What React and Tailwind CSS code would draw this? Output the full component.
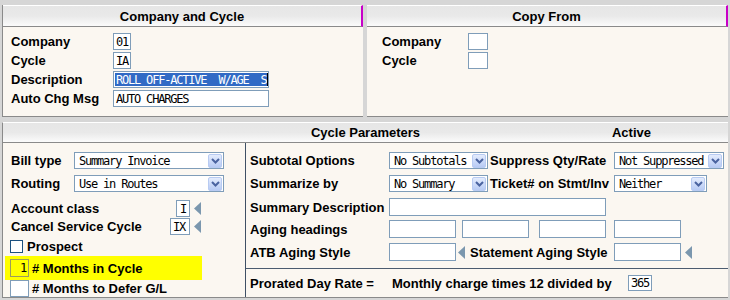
import React from 'react';

const mono = "font-['DejaVu_Sans_Mono',monospace] text-[12px] font-normal tracking-[-1.2px] leading-none whitespace-nowrap text-black";

const Chevron = () => (
  <svg width="9" height="6" viewBox="0 0 9 6">
    <path d="M1 1l3.5 3.5L8 1" fill="none" stroke="#4a63a0" strokeWidth="2" />
  </svg>
);

const Arrow = () => (
  <svg width="7" height="13" viewBox="0 0 7 13" className="shrink-0">
    <polygon points="7,0 7,13 0,6.5" fill="#7b97ae" />
  </svg>
);

const Select = ({ value, w }) => (
  <div className={`flex h-[17px] shrink-0 items-center border border-[#7f9db9] bg-white ${w}`}>
    <span className={`flex-1 pl-[4px] ${mono}`}>{value}</span>
    <div className="mr-[1px] flex h-[14px] w-[14px] items-center justify-center rounded-[2px] border border-[#b8cbf2] bg-linear-to-b from-[#e4ecfd] to-[#b7caf4]">
      <Chevron />
    </div>
  </div>
);

const Input = ({ value, w, h = 'h-[17px]', className = '' }) => (
  <div className={`flex shrink-0 items-center border border-[#7f9db9] bg-white pl-[2px] ${w} ${h} ${className}`}>
    <span className={mono}>{value}</span>
  </div>
);

const Head = ({ children, className = '' }) => (
  <div className={`flex h-[22px] items-center justify-center border-t border-t-white border-b border-b-[#8a8a8a] bg-linear-to-b from-[#e6e6e6] via-[#e9e9e9] to-[#fbfbfb] ${className}`}>
    {children}
  </div>
);

export default function App() {
  return (
    <div className="h-[300px] w-[730px] overflow-hidden bg-[#d6d6d6] font-['Liberation_Sans',Arial,sans-serif] text-[13px] font-bold leading-[15px] text-black">
      {/* Top: Company and Cycle / Copy From */}
      <div className="flex h-[117px] pl-[2px] pt-[5px]">
        <div className="flex w-[361px] flex-col border-l border-[#8a8a8a]">
          <Head className="border-r-2 border-r-[#c800c8]">Company and Cycle</Head>
          <div className="flex flex-1 flex-col gap-[2px] border-b border-[#8a8a8a] bg-[#fbf7f1] pl-[8px] pt-[6px]">
            <div className="flex h-[17px] items-center">
              <span className="w-[102px]">Company</span>
              <Input value="01" w="w-[18px]" />
            </div>
            <div className="flex h-[17px] items-center">
              <span className="w-[102px]">Cycle</span>
              <Input value="IA" w="w-[18px]" />
            </div>
            <div className="flex h-[17px] items-center">
              <span className="w-[102px]">Description</span>
              <div className="flex h-[17px] w-[156px] items-center border border-[#7f9db9] bg-white px-[1px]">
                <span className={`${mono} flex h-[13px] flex-1 items-center bg-[#316ac5] pl-[1px] !text-white`}>
                  ROLL OFF-ACTIVE&nbsp;&nbsp;W/AGE&nbsp;&nbsp;S
                </span>
                <span className="h-[13px] w-[1px] bg-black" />
              </div>
            </div>
            <div className="flex h-[17px] items-center">
              <span className="w-[102px]">Auto Chg Msg</span>
              <Input value="AUTO CHARGES" w="w-[156px]" />
            </div>
          </div>
        </div>

        <div className="ml-[4px] flex w-[361px] flex-col">
          <Head className="border-r-2 border-r-[#c800c8]">Copy From</Head>
          <div className="flex flex-1 flex-col gap-[2px] border-b border-[#8a8a8a] bg-[#fbf7f1] pl-[15px] pt-[6px]">
            <div className="flex h-[17px] items-center">
              <span className="w-[86px]">Company</span>
              <Input value="" w="w-[20px]" />
            </div>
            <div className="flex h-[17px] items-center">
              <span className="w-[86px]">Cycle</span>
              <Input value="" w="w-[20px]" />
            </div>
          </div>
        </div>
      </div>

      {/* Cycle Parameters */}
      <div className="ml-[2px] mt-[5px] w-[726px]">
        <div className="grid h-[21px] grid-cols-[1fr_auto_1fr] items-center border-l border-t border-[#8a8a8a] border-t-white border-b border-b-[#8a8a8a] bg-linear-to-b from-[#e6e6e6] via-[#e9e9e9] to-[#fbfbfb]">
          <span />
          <span>Cycle Parameters</span>
          <span className="pr-[77px] text-right">Active</span>
        </div>

        <div className="flex h-[155px] border-b border-l border-[#8a8a8a] bg-[#fbf7f1]">
          {/* left column */}
          <div className="flex w-[243px] flex-col border-r border-[#3f5065] pt-[9px]">
            <div className="flex h-[17px] items-center pl-[8px]">
              <span className="w-[63px]">Bill type</span>
              <Select value="Summary Invoice" w="w-[150px]" />
            </div>
            <div className="mt-[6px] flex h-[17px] items-center pl-[8px]">
              <span className="w-[63px]">Routing</span>
              <Select value="Use in Routes" w="w-[150px]" />
            </div>
            <div className="mt-[8px] flex h-[17px] w-[198px] items-center pl-[8px]">
              <span className="flex-1">Account class</span>
              <Input value="I" w="w-[14px]" className="!pl-[3px]" />
              <span className="ml-[4px] flex"><Arrow /></span>
            </div>
            <div className="mt-[1px] flex h-[17px] w-[198px] items-center pl-[8px]">
              <span className="flex-1">Cancel Service Cycle</span>
              <Input value="IX" w="w-[20px]" />
              <span className="ml-[4px] flex"><Arrow /></span>
            </div>
            <div className="mt-[4px] flex h-[15px] items-center pl-[7px]">
              <span className="h-[13px] w-[13px] border border-[#1c5180] bg-white" />
              <span className="ml-[4px]">Prospect</span>
            </div>
            <div className="ml-[2px] mt-[2px] flex h-[24px] w-[197px] items-center bg-[#ffff00]">
              <div className="ml-[5px] flex h-[18px] w-[19px] items-center justify-end border border-[#9c9c5c] pr-[2px]">
                <span className={mono}>1</span>
              </div>
              <span className="ml-[3px]"># Months in Cycle</span>
            </div>
            <div className="flex h-[17px] items-center pl-[7px]">
              <Input value="" w="w-[19px]" />
              <span className="ml-[3px]"># Months to Defer G/L</span>
            </div>
          </div>

          {/* right column */}
          <div className="flex flex-1 flex-col pt-[9px]">
            <div className="flex h-[17px] items-center pl-[4px]">
              <span className="w-[139px]">Subtotal Options</span>
              <Select value="No Subtotals" w="w-[99px]" />
              <span className="ml-[2px] w-[124px]">Suppress Qty/Rate</span>
              <Select value="Not Suppressed" w="w-[110px]" />
            </div>
            <div className="mt-[6px] flex h-[17px] items-center pl-[4px]">
              <span className="w-[139px]">Summarize by</span>
              <Select value="No Summary" w="w-[99px]" />
              <span className="ml-[2px] w-[124px]">Ticket# on Stmt/Inv</span>
              <Select value="Neither" w="w-[93px]" />
            </div>
            <div className="mt-[6px] flex h-[18px] items-center pl-[4px]">
              <span className="w-[139px]">Summary Description</span>
              <Input value="" w="w-[217px]" h="h-[18px]" />
            </div>
            <div className="mt-[4px] flex h-[18px] items-center pl-[4px]">
              <span className="w-[139px]">Aging headings</span>
              <Input value="" w="w-[67px]" h="h-[18px]" />
              <Input value="" w="w-[67px]" h="h-[18px]" className="ml-[6px]" />
              <Input value="" w="w-[67px]" h="h-[18px]" className="ml-[10px]" />
              <Input value="" w="w-[67px]" h="h-[18px]" className="ml-[8px]" />
            </div>
            <div className="mt-[5px] flex h-[18px] items-center pl-[4px]">
              <span className="w-[139px]">ATB Aging Style</span>
              <Input value="" w="w-[67px]" h="h-[18px]" />
              <span className="ml-[2px] flex"><Arrow /></span>
              <span className="ml-[5px] w-[144px]">Statement Aging Style</span>
              <Input value="" w="w-[67px]" h="h-[18px]" />
              <span className="ml-[4px] flex"><Arrow /></span>
            </div>
            <div className="mt-[7px] flex flex-1 items-center border-t border-[#4c5c70] pl-[4px]">
              <span className="w-[142px]">Prorated Day Rate =</span>
              <span className="w-[236px]">Monthly charge times 12 divided by</span>
              <Input value="365" w="w-[24px]" h="h-[16px]" />
            </div>
          </div>
        </div>
      </div>
    </div>
  );
}
